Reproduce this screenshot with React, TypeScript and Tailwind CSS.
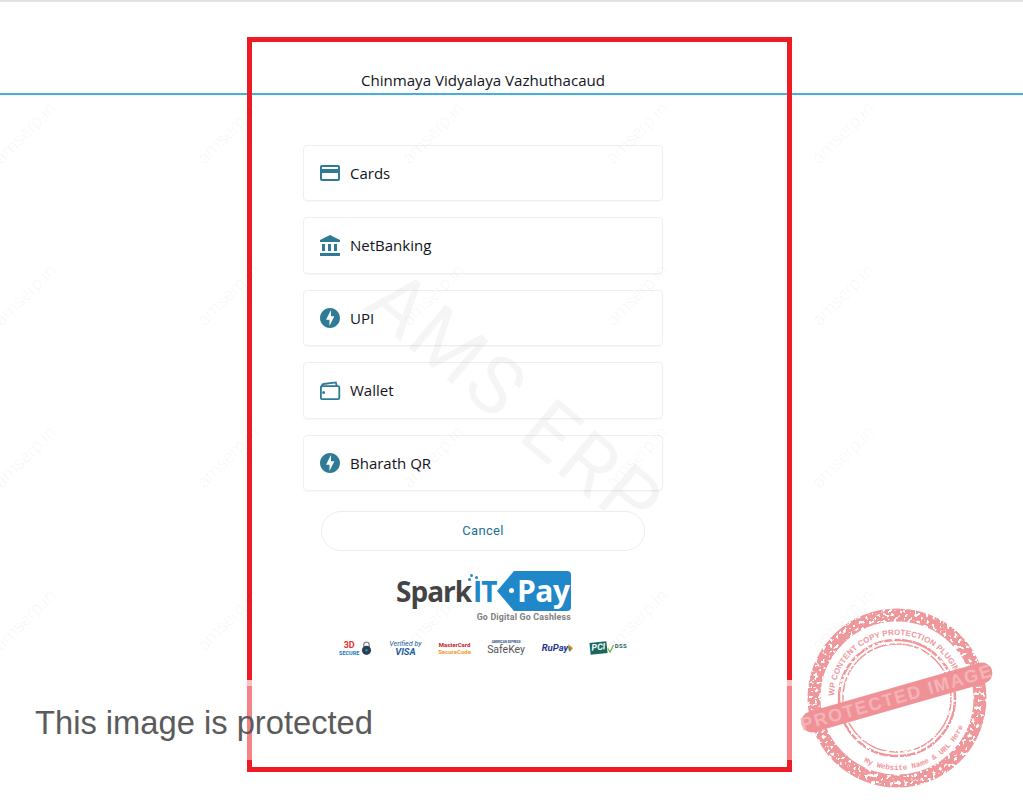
import * as React from "react";

const OPTIONS = [
  { label: "Cards", icon: "card" },
  { label: "NetBanking", icon: "bank" },
  { label: "UPI", icon: "bolt" },
  { label: "Wallet", icon: "wallet" },
  { label: "Bharath QR", icon: "bolt" },
];

const MARK_X = [25, 228, 433, 637, 843];
const MARK_Y = [133, 295, 457, 620];

function OptionIcon({ name }: { name: string }) {
  return (
    <svg viewBox="0 0 24 24" className="h-6 w-6 shrink-0 fill-[#2f7a94]">
      {name === "card" && (
        <path d="M20 4H4c-1.11 0-1.99.89-1.99 2L2 18c0 1.11.89 2 2 2h16c1.11 0 2-.89 2-2V6c0-1.11-.89-2-2-2zm0 14H4v-6h16v6zm0-10H4V6h16v2z" />
      )}
      {name === "bank" && (
        <path d="M4 10v7h3v-7H4zm6 0v7h3v-7h-3zM2 22h20v-3H2v3zm14-12v7h3v-7h-3zM12 1 2 6v2h20V6L12 1z" />
      )}
      {name === "bolt" && (
        <path d="M12 2.02c-5.51 0-9.98 4.47-9.98 9.98s4.47 9.98 9.98 9.98 9.98-4.47 9.98-9.98S17.51 2.02 12 2.02zM11.48 20v-6.26H8L13 4v6.26h3.35L11.48 20z" />
      )}
      {name === "wallet" && (
        <g className="fill-none stroke-[#2f7a94]" strokeWidth="1.8">
          <rect x="2.9" y="7.2" width="18.4" height="13" rx="1.4" />
          <path d="M3 8.5 4.2 6c.3-.6.8-.9 1.4-1l12.2-1.6.9 3.6" />
          <circle cx="5.6" cy="13.6" r=".6" className="fill-[#2f7a94]" />
        </g>
      )}
    </svg>
  );
}

function SparkLogo() {
  return (
    <div className="flex flex-col items-end">
      <div className="flex h-10 items-center font-['Open_Sans',sans-serif]">
        <span className="w-[77px] text-[28px] font-bold leading-none tracking-[-1px] text-[#444444]">Spark</span>
        <span className="relative mr-[2px] w-[22px] text-[28px] font-bold leading-none tracking-[-1px] text-[#2088c8]">
          IT
          <span className="absolute -top-[3px] left-[-3px] h-[3px] w-[3px] rounded-full bg-[#2088c8]" />
          <span className="absolute -top-[1px] left-[2px] h-[3px] w-[3px] rounded-full bg-[#2088c8]" />
          <span className="absolute top-[1px] left-[-5px] h-[3px] w-[3px] rounded-full bg-[#2088c8]" />
        </span>
        <svg viewBox="0 0 17 40" className="h-10 w-[17px] fill-[#2088c8]">
          <path d="M17 0v40L0 20z" />
        </svg>
        <div className="relative flex h-10 w-[57px] items-center rounded-r-[4px] bg-[#2088c8] pl-[3px]">
          <span className="absolute left-[-5px] top-[17px] h-[5px] w-[5px] rounded-full bg-white" />
          <span className="text-[30px] font-bold leading-none tracking-[-0.5px] text-white">Pay</span>
        </div>
      </div>
      <span className="mt-[1px] font-['Roboto',sans-serif] text-[8.8px] font-bold leading-[10px] tracking-[0.2px] text-[#808080]">
        Go Digital Go Cashless
      </span>
    </div>
  );
}

function Badges() {
  return (
    <div className="flex h-[18px] w-[288px] items-center justify-between font-['Roboto',sans-serif]">
      <div className="flex items-center gap-[2px]">
        <div className="flex flex-col items-center text-[5.5px] font-bold leading-[6px] text-[#1c75bc]">
          <span className="text-[9px] leading-[9px] text-[#e2342d]">3D</span>
          SECURE
        </div>
        <svg viewBox="0 0 12 16" className="h-4 w-[11px]">
          <path d="M3 7V4.5a3 3 0 0 1 6 0V7" fill="none" stroke="#888888" strokeWidth="1.4" />
          <circle cx="6" cy="10.5" r="5" fill="#2b3f55" />
          <circle cx="6" cy="10.5" r="1.2" fill="#4a9ad4" />
        </svg>
      </div>
      <div className="flex w-[33px] flex-col items-center leading-none text-[#1c5c9c]">
        <span className="text-[7.2px] italic">Verified by</span>
        <span className="text-[9.5px] font-bold italic leading-[9px]">VISA</span>
      </div>
      <div className="flex w-[32px] flex-col items-center text-[6px] font-bold leading-[7.5px]">
        <span className="text-[#c8202c]">MasterCard</span>
        <span className="text-[#ee9a2c]">SecureCode</span>
      </div>
      <div className="flex w-[38px] flex-col items-center leading-none text-[#555555]">
        <span className="text-[3px] font-bold text-[#1c4c7c]">AMERICAN EXPRESS</span>
        <span className="text-[10.5px] leading-[11px]">SafeKey</span>
      </div>
      <div className="flex items-center text-[9.5px] font-bold italic text-[#27348b]">
        RuPay
        <svg viewBox="0 0 5 8" className="h-2 w-[5px]">
          <path d="M0 0 5 4 2 8z" fill="#e8862c" />
          <path d="M0 2 3 4.5 1 8z" fill="#3a9a4c" />
        </svg>
      </div>
      <div className="flex items-center">
        <div className="flex h-[12px] w-[17px] -rotate-6 items-center justify-center bg-[#19685f] text-[9px] font-bold italic text-white">
          PCI
        </div>
        <svg viewBox="0 0 8 10" className="h-[11px] w-[7px]">
          <path d="M1 5 3.5 9 7.5 1" fill="none" stroke="#6cb33f" strokeWidth="1.5" />
        </svg>
        <span className="ml-[1px] self-start pt-[1px] text-[6px] font-bold leading-none tracking-[0.3px] text-[#19685f]">DSS</span>
      </div>
    </div>
  );
}

function Stamp() {
  return (
    <svg viewBox="0 0 200 190" className="absolute left-[797px] top-[603px] h-[190px] w-[200px]">
      <defs>
        <filter id="worn" x="-5%" y="-5%" width="110%" height="110%">
          <feTurbulence type="fractalNoise" baseFrequency="0.28" numOctaves="2" seed="6" result="noise" />
          <feColorMatrix
            in="noise"
            type="matrix"
            values="0 0 0 0 0  0 0 0 0 0  0 0 0 0 0  0 0 0 -14 9"
            result="holes"
          />
          <feComposite in="SourceGraphic" in2="holes" operator="in" />
        </filter>
        <path id="stampTop" d="M 37 95 a 63 63 0 0 1 126 0" transform="rotate(2 100 95)" />
        <path id="stampBottom" d="M 28 95 a 72 72 0 0 0 144 0" />
      </defs>
      <g filter="url(#worn)" fill="none" stroke="#f0979b">
        <circle cx="100" cy="95" r="83" strokeWidth="13" />
        <circle cx="100" cy="95" r="58" strokeWidth="2.5" />
        <circle cx="100" cy="95" r="54" strokeWidth="1.5" />
      </g>
      <text className="fill-[#f0979b] font-['Liberation_Sans',sans-serif] text-[8px] font-bold tracking-[0.1px]">
        <textPath href="#stampTop">WP CONTENT COPY PROTECTION PLUGIN</textPath>
      </text>
      <text className="fill-[#f0979b] font-['Liberation_Mono',monospace] text-[7.6px] font-bold">
        <textPath href="#stampBottom" startOffset="78">My Website Name &amp; URL Here</textPath>
      </text>
      <g transform="rotate(-16 100 95)">
        <rect x="1" y="84" width="198" height="21" rx="10.5" fill="#f09196" />
        <text
          x="100"
          y="100.5"
          textAnchor="middle"
          className="fill-[#f4b4b7] font-['Liberation_Sans',sans-serif] text-[18px] font-bold tracking-[1.6px]"
        >
          PROTECTED IMAGE
        </text>
      </g>
    </svg>
  );
}

export default function App() {
  return (
    <div className="relative h-[807px] w-full overflow-hidden bg-white font-['Open_Sans',sans-serif]">
      {/* page header */}
      <div className="h-[95px] border-t-2 border-b-2 border-t-[#e2e2e2] border-b-[#45b1d6]" />

      {/* checkout frame */}
      <div className="absolute left-[247px] top-[37px] h-[735px] w-[545px] border-[5px] border-[#ed1c24]">
        <div className="ml-[51px] flex w-[360px] flex-col items-center pt-[27px]">
          <p className="text-[15.1px] leading-[22px] text-[#0f1420]">Chinmaya Vidyalaya Vazhuthacaud</p>
          <div className="mt-[53.9px] flex w-full flex-col gap-4">
            {OPTIONS.map((o) => (
              <div
                key={o.label}
                className="flex h-[56.5px] items-center gap-[6px] rounded border border-[#efefef] pl-[14px] shadow-[0_1px_1px_rgba(0,0,0,0.03)]"
              >
                <OptionIcon name={o.icon} />
                <span className="pl-[2px] text-[15px] text-[#0f1420]">{o.label}</span>
              </div>
            ))}
          </div>
          <button className="mt-5 h-10 w-[324px] rounded-full border border-[#ececec] pb-[2px] font-['Roboto',sans-serif] text-[13px] tracking-[0.3px] text-[#1f6f8f]">
            Cancel
          </button>
          <div className="mt-5 w-[176px]">
            <SparkLogo />
          </div>
          <div className="mt-[17px]">
            <Badges />
          </div>
        </div>
      </div>

      {/* watermarks */}
      {MARK_Y.flatMap((y) =>
        MARK_X.map((x) => (
          <span
            key={`${x}-${y}`}
            className="pointer-events-none absolute w-[90px] -translate-x-1/2 -translate-y-1/2 -rotate-45 text-center font-['Roboto',sans-serif] text-[18px] font-light leading-none text-black/5"
            style={{ left: x, top: y }}
          >
            amserp.in
          </span>
        ))
      )}
      <span className="pointer-events-none absolute left-[515px] top-[402px] -translate-x-1/2 -translate-y-1/2 rotate-[40deg] whitespace-nowrap font-['Roboto',sans-serif] text-[80px] font-normal leading-none tracking-[3px] text-black/[0.04]">
        AMS ERP
      </span>

      {/* protection overlay */}
      <div className="absolute inset-x-0 top-[680px] h-[80px] bg-white/45">
        <div className="h-[6px] bg-white/50" />
      </div>
      <p className="absolute left-[35px] top-[704px] font-['Liberation_Sans',sans-serif] text-[32.7px] leading-[37px] text-[#5b5b5b]">
        This image is protected
      </p>
      <Stamp />
    </div>
  );
}
